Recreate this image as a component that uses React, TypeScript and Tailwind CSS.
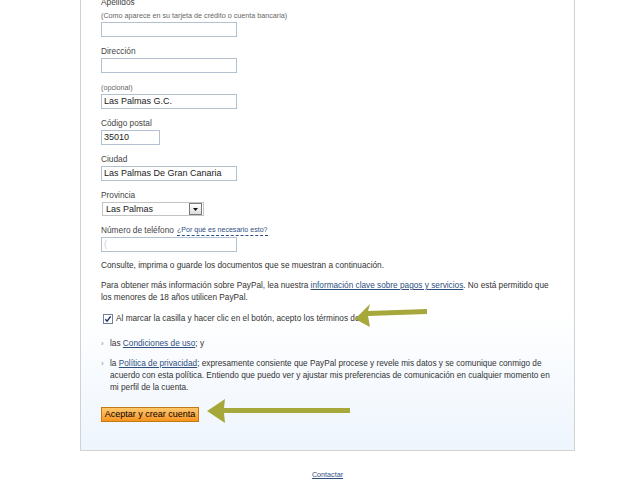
import React from "react";

const inputCls =
  "block h-[15px] border border-[#b3c0d0] bg-white pl-[2px] text-[9px] leading-[13px] text-[#222]";

function Field({
  label,
  hint,
  value,
  width = "w-[136px]",
  faint,
  extra,
}: {
  label?: string;
  hint?: string;
  value?: string;
  width?: string;
  faint?: boolean;
  extra?: React.ReactNode;
}) {
  return (
    <div className="mb-[8px]">
      {label && (
        <div className="flex items-center gap-[3px] h-[13px] text-[8.3px] leading-[13px] text-[#444]">
          {label}
          {extra}
        </div>
      )}
      {hint && <div className="h-[13px] text-[7.2px] leading-[13px] text-[#666]">{hint}</div>}
      <div className={`${inputCls} ${width} ${faint ? "text-[#d0d0d0]" : ""}`}>{value}</div>
    </div>
  );
}

function Bullet({ children }: { children: React.ReactNode }) {
  return (
    <div className="flex">
      <span className="w-[9px] shrink-0 text-[8px] leading-[12px] text-[#888]">›</span>
      <div>{children}</div>
    </div>
  );
}

export default function App() {
  return (
    <div
      className="relative w-[640px] h-[486px] overflow-hidden bg-white text-[#333]"
      style={{ fontFamily: '"Liberation Sans", Arial, sans-serif' }}
    >
      <div className="ml-[80px] w-[495px] -mt-[10px] border-x border-b border-[#d2d2d2] bg-gradient-to-b from-white from-[70%] to-[#eef5fd] pl-[20px] pr-[22px] pt-[6px] pb-[28px]">
        <Field label="Apellidos" hint="(Como aparece en su tarjeta de crédito o cuenta bancaria)" value="" />
        <Field label="Dirección" value="" />
        <Field hint="(opcional)" value="Las Palmas G.C." />
        <Field label="Código postal" value="35010" width="w-[59px]" />
        <Field label="Ciudad" value="Las Palmas De Gran Canaria" />

        <div className="mb-[8px]">
          <div className="h-[13px] text-[8.3px] leading-[13px] text-[#444]">Provincia</div>
          <div className="ml-[1px] flex h-[14px] w-[102px] items-center border border-[#c4c4c4] bg-white">
            <span className="flex-1 pl-[3px] text-[9px] leading-[12px] text-[#222]">Las Palmas</span>
            <span className="flex h-[12px] w-[13px] items-center justify-center border border-[#7a7a7a] bg-gradient-to-b from-white to-[#dcdcdc] mr-[1px]">
              <svg width="5" height="3" viewBox="0 0 5 3">
                <path d="M0 0h5L2.5 3z" fill="#111" />
              </svg>
            </span>
          </div>
        </div>

        <Field
          label="Número de teléfono"
          value="("
          faint
          extra={
            <span className="text-[7.1px] leading-[10px] text-[#2f4f7f] border-b border-dashed border-[#2f4f7f]">
              ¿Por qué es necesario esto?
            </span>
          }
        />

        <div className="text-[8.25px] leading-[12px] text-[#333]">
          <p className="mt-[8px]">Consulte, imprima o guarde los documentos que se muestran a continuación.</p>
          <p className="mt-[8px]">
            Para obtener más información sobre PayPal, lea nuestra{" "}
            <span className="underline text-[#2f4f7f]">información clave sobre pagos y servicios</span>. No está
            permitido que los menores de 18 años utilicen PayPal.
          </p>

          <div className="mt-[9px] flex items-center gap-[2px]">
            <svg width="12" height="12" viewBox="0 0 12 12" className="ml-[1px]">
              <rect x="1.5" y="1.5" width="9" height="9" fill="#fff" stroke="#6e7f96" />
              <path d="M3.3 6.2l1.8 2 3.6-4.8" fill="none" stroke="#1d2f6f" strokeWidth="1.4" />
            </svg>
            <span>Al marcar la casilla y hacer clic en el botón, acepto los términos de:</span>
          </div>

          <div className="mt-[13px]">
            <Bullet>
              las <span className="underline text-[#2f4f7f]">Condiciones de uso</span>; y
            </Bullet>
          </div>
          <div className="mt-[8px]">
            <Bullet>
              la <span className="underline text-[#2f4f7f]">Política de privacidad</span>; expresamente consiente que
              PayPal procese y revele mis datos y se comunique conmigo de acuerdo con esta política. Entiendo que
              puedo ver y ajustar mis preferencias de comunicación en cualquier momento en mi perfil de la cuenta.
            </Bullet>
          </div>

          <button className="mt-[13px] block h-[15px] w-[98px] border border-[#c27a12] bg-gradient-to-b from-[#ffc76a] to-[#f7941d] text-[9px] leading-[13px] text-black">
            Aceptar y crear cuenta
          </button>
        </div>
      </div>

      <div className="ml-[80px] w-[495px] mt-[19px] text-center text-[7.2px] leading-[10px]">
        <span className="underline text-[#2f4f7f]">Contactar</span>
      </div>

      <svg className="pointer-events-none absolute left-0 top-0" width="640" height="486" viewBox="0 0 640 486">
        <polygon points="355,319 370,304 368,311 427,309 427,314 368,316 370,327" fill="#a6a83b" />
        <polygon points="207,411 225,399 224,408 350,408 350,413 224,413 225,423" fill="#a6a83b" />
      </svg>
    </div>
  );
}
